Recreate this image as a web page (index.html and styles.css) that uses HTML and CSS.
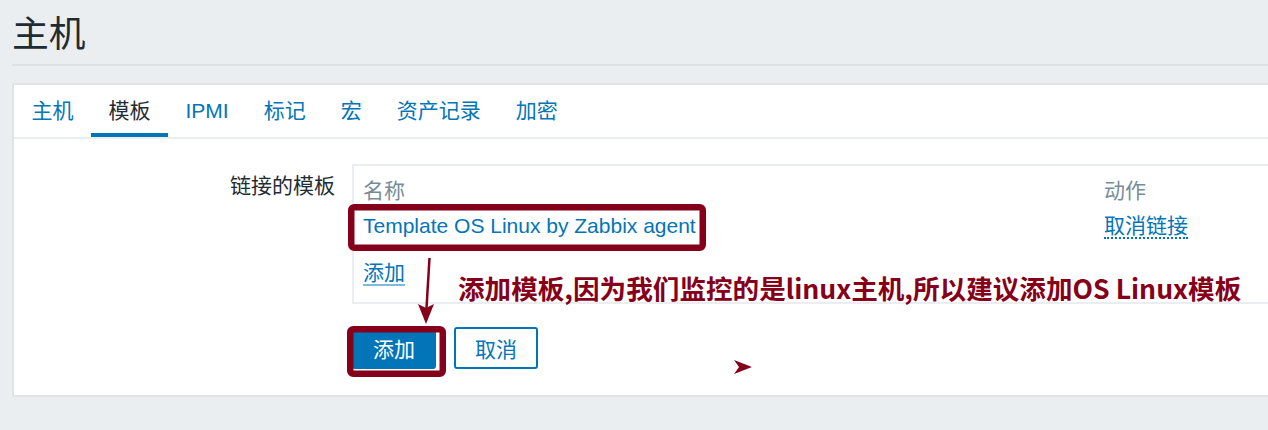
FILE: index.html
```html
<!DOCTYPE html>
<html lang="zh-CN">
<head>
<meta charset="utf-8">
<title>主机</title>
<link rel="stylesheet" href="styles.css">
</head>
<body>
<div class="page">
  <header class="header">
    <h1 class="title">主机</h1>
  </header>
  <main class="panel">
    <ul class="tabs">
      <li class="tab">主机</li>
      <li class="tab active">模板</li>
      <li class="tab">IPMI</li>
      <li class="tab">标记</li>
      <li class="tab">宏</li>
      <li class="tab">资产记录</li>
      <li class="tab">加密</li>
    </ul>
    <div class="form">
      <div class="form-row">
        <div class="form-label">链接的模板</div>
        <div class="form-field">
          <div class="tpl-table">
            <div class="tpl-row tpl-head">
              <span class="cell">名称</span>
              <span class="cell">动作</span>
            </div>
            <div class="tpl-row tpl-item">
              <span class="cell"><a class="link">Template OS Linux by Zabbix agent</a></span>
              <span class="cell"><a class="link link-dotted">取消链接</a></span>
            </div>
            <div class="tpl-row tpl-add">
              <span class="cell"><a class="link link-add">添加</a></span>
            </div>
          </div>
        </div>
      </div>
      <div class="form-row form-actions">
        <div></div>
        <div class="buttons">
          <button class="btn btn-primary">添加</button>
          <button class="btn btn-secondary">取消</button>
        </div>
      </div>
    </div>
  </main>

  <svg class="annot" width="1268" height="430" viewBox="0 0 1268 430">
    <rect x="351.25" y="207.25" width="351.5" height="40.5" rx="3" fill="none" stroke="#85001b" stroke-width="6.5"/>
    <rect x="350.25" y="329.25" width="92.5" height="44.5" rx="3" fill="none" stroke="#85001b" stroke-width="6.5"/>
    <line x1="429.5" y1="258" x2="426.5" y2="308" stroke="#85001b" stroke-width="2.5"/>
    <polygon points="418,304 426,324 434,304 426,308" fill="#85001b"/>
    <polygon points="734,360 752,367 734,374 739,367" fill="#85001b"/>
  </svg>
  <div class="annot-text">添加模板,因为我们监控的是linux主机,所以建议添加OS Linux模板</div>
</div>
</body>
</html>
```

FILE: styles.css
```css
html, body {
  margin: 0;
  padding: 0;
  background: #ebeef0;
  overflow: hidden;
}

body {
  font-family: "Liberation Sans", "Noto Sans CJK SC", sans-serif;
  font-size: 21px;
  color: #1f2c33;
}

.page {
  position: relative;
  width: 1268px;
  height: 430px;
  overflow: hidden;
}

.header {
  margin-left: 12px;
  padding-top: 12.7px;
  padding-bottom: 7.3px;
  border-bottom: 2px solid #dde2e5;
}

.title {
  margin: 0;
  font-size: 36.75px;
  font-weight: normal;
  line-height: 44px;
  color: #1f2c33;
}

.panel {
  display: block;
  margin: 17px 0 0 12px;
  border: 2px solid #dfe4e7;
  border-right-width: 0;
  background: #fff;
  padding-bottom: 26px;
}

.tabs {
  display: flex;
  margin: 0;
  padding: 0;
  list-style: none;
  border-bottom: 2px solid #ebeef0;
}

.tab {
  padding: 4px 17.5px 0;
  line-height: 44px;
  border-bottom: 4.5px solid transparent;
  color: #0275b8;
}

.tab.active {
  color: #1f2c33;
  border-bottom-color: #0275b8;
}

.form {
  padding-top: 25.5px;
}

.form-row {
  display: grid;
  grid-template-columns: 321px minmax(0, 1fr);
  column-gap: 17px;
}

.form-label {
  text-align: right;
  padding-top: 10px;
  line-height: 24px;
}

.tpl-table {
  border: 2px solid #ebeef0;
  border-right-width: 0;
}

.tpl-row {
  display: grid;
  grid-template-columns: 741px minmax(0, 1fr);
  line-height: 24px;
}

.cell {
  padding-left: 9px;
  white-space: nowrap;
}

.tpl-head {
  padding-top: 12.2px;
  padding-bottom: 6px;
  color: #768d99;
}

.tpl-item {
  padding-top: 5.8px;
  padding-bottom: 11px;
}

.tpl-add {
  padding-top: 11.2px;
  padding-bottom: 17.8px;
}

.link {
  color: #0275b8;
  text-decoration: none;
}

.link-dotted {
  border-bottom: 2px dotted #0275b8;
}

.link-add {
  border-bottom: 2px solid rgba(2, 117, 184, 0.5);
}

.form-actions {
  margin-top: 23px;
}

.buttons {
  display: flex;
  gap: 18px;
}

.btn {
  box-sizing: border-box;
  width: 84px;
  height: 42px;
  padding: 0;
  border: 2px solid #0275b8;
  border-radius: 3px;
  font: inherit;
  display: flex;
  align-items: center;
  justify-content: center;
}

.btn-primary {
  background: #0275b8;
  color: #fff;
}

.btn-secondary {
  background: #fff;
  color: #0275b8;
}

.annot {
  position: absolute;
  left: 0;
  top: 0;
  pointer-events: none;
}

.annot-text {
  position: absolute;
  left: 458px;
  top: 274.5px;
  font-family: "Noto Sans CJK SC", sans-serif;
  font-weight: bold;
  font-size: 26.6px;
  line-height: 1;
  color: #86001a;
  white-space: nowrap;
}
```
